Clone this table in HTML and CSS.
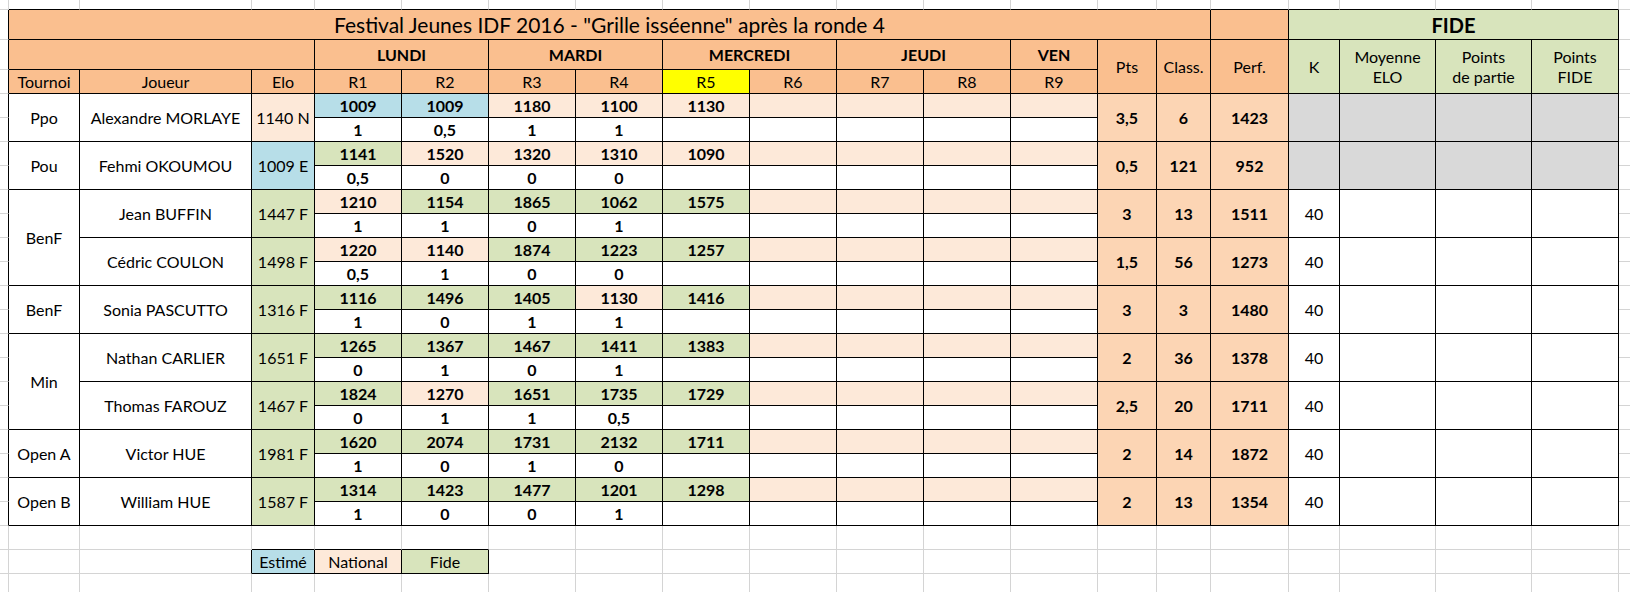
FILE: index.html
```html
<!DOCTYPE html>
<html lang="fr">
<head>
<meta charset="utf-8">
<title>Grille isséenne</title>
<link rel="stylesheet" href="styles.css">
</head>
<body>
<table class="sheet">
<colgroup>
<col class="w-a"><col class="w-tour"><col class="w-joueur"><col class="w-elo">
<col class="w-r"><col class="w-r"><col class="w-r"><col class="w-r"><col class="w-r"><col class="w-r"><col class="w-r"><col class="w-r"><col class="w-r">
<col class="w-pts"><col class="w-class"><col class="w-perf"><col class="w-k"><col class="w-moy"><col class="w-pp"><col class="w-pf"><col class="w-z">
</colgroup>
<tbody>
<tr class="r-top">
<td class="g"></td><td class="t"></td><td class="t"></td><td class="t"></td>
<td class="t"></td><td class="t"></td><td class="t"></td><td class="t"></td><td class="t"></td><td class="t"></td><td class="t"></td><td class="t"></td><td class="t"></td>
<td class="t"></td><td class="t"></td><td class="t"></td><td class="t"></td><td class="t"></td><td class="t"></td><td class="t"></td><td class="g"></td>
</tr>
<tr class="r-head">
<td class="a"></td>
<td class="o title" colspan="14">Festival Jeunes IDF 2016 - &quot;Grille isséenne&quot; après la ronde 4</td>
<td class="o"></td>
<td class="f fide" colspan="4">FIDE</td>
<td class="g"></td>
</tr>
<tr class="r-head">
<td class="a"></td>
<td class="o" colspan="3"></td>
<td class="o b" colspan="2">LUNDI</td>
<td class="o b" colspan="2">MARDI</td>
<td class="o b" colspan="2">MERCREDI</td>
<td class="o b" colspan="2">JEUDI</td>
<td class="o b">VEN</td>
<td class="o" rowspan="2">Pts</td>
<td class="o" rowspan="2">Class.</td>
<td class="o" rowspan="2">Perf.</td>
<td class="f" rowspan="2">K</td>
<td class="f two" rowspan="2">Moyenne<br>ELO</td>
<td class="f two" rowspan="2">Points<br>de partie</td>
<td class="f two" rowspan="2">Points<br>FIDE</td>
<td class="g"></td>
</tr>
<tr class="r-sub">
<td class="a"></td>
<td class="o">Tournoi</td><td class="o">Joueur</td><td class="o">Elo</td>
<td class="o">R1</td><td class="o">R2</td><td class="o">R3</td><td class="o">R4</td><td class="y">R5</td><td class="o">R6</td><td class="o">R7</td><td class="o">R8</td><td class="o">R9</td>
<td class="g"></td>
</tr>

<!-- Alexandre MORLAYE -->
<tr class="r-sub">
<td class="a"></td>
<td rowspan="2">Ppo</td><td rowspan="2">Alexandre MORLAYE</td><td class="n" rowspan="2">1140 N</td>
<td class="e b">1009</td><td class="e b">1009</td><td class="n b">1180</td><td class="n b">1100</td><td class="n b">1130</td><td class="n"></td><td class="n"></td><td class="n"></td><td class="n"></td>
<td class="p b" rowspan="2">3,5</td><td class="p b" rowspan="2">6</td><td class="p b" rowspan="2">1423</td>
<td class="s" rowspan="2"></td><td class="s" rowspan="2"></td><td class="s" rowspan="2"></td><td class="s" rowspan="2"></td>
<td class="g"></td>
</tr>
<tr class="r-sub">
<td class="a"></td>
<td class="b">1</td><td class="b">0,5</td><td class="b">1</td><td class="b">1</td><td></td><td></td><td></td><td></td><td></td>
<td class="g"></td>
</tr>

<!-- Fehmi OKOUMOU -->
<tr class="r-sub">
<td class="a"></td>
<td rowspan="2">Pou</td><td rowspan="2">Fehmi OKOUMOU</td><td class="e" rowspan="2">1009 E</td>
<td class="f b">1141</td><td class="n b">1520</td><td class="n b">1320</td><td class="n b">1310</td><td class="n b">1090</td><td class="n"></td><td class="n"></td><td class="n"></td><td class="n"></td>
<td class="p b" rowspan="2">0,5</td><td class="p b" rowspan="2">121</td><td class="p b" rowspan="2">952</td>
<td class="s" rowspan="2"></td><td class="s" rowspan="2"></td><td class="s" rowspan="2"></td><td class="s" rowspan="2"></td>
<td class="g"></td>
</tr>
<tr class="r-sub">
<td class="a"></td>
<td class="b">0,5</td><td class="b">0</td><td class="b">0</td><td class="b">0</td><td></td><td></td><td></td><td></td><td></td>
<td class="g"></td>
</tr>

<!-- Jean BUFFIN -->
<tr class="r-sub">
<td class="a"></td>
<td rowspan="4">BenF</td><td rowspan="2">Jean BUFFIN</td><td class="f" rowspan="2">1447 F</td>
<td class="n b">1210</td><td class="f b">1154</td><td class="f b">1865</td><td class="f b">1062</td><td class="f b">1575</td><td class="n"></td><td class="n"></td><td class="n"></td><td class="n"></td>
<td class="p b" rowspan="2">3</td><td class="p b" rowspan="2">13</td><td class="p b" rowspan="2">1511</td>
<td rowspan="2">40</td><td rowspan="2"></td><td rowspan="2"></td><td rowspan="2"></td>
<td class="g"></td>
</tr>
<tr class="r-sub">
<td class="a"></td>
<td class="b">1</td><td class="b">1</td><td class="b">0</td><td class="b">1</td><td></td><td></td><td></td><td></td><td></td>
<td class="g"></td>
</tr>

<!-- Cédric COULON -->
<tr class="r-sub">
<td class="a"></td>
<td rowspan="2">Cédric COULON</td><td class="f" rowspan="2">1498 F</td>
<td class="n b">1220</td><td class="n b">1140</td><td class="f b">1874</td><td class="f b">1223</td><td class="f b">1257</td><td class="n"></td><td class="n"></td><td class="n"></td><td class="n"></td>
<td class="p b" rowspan="2">1,5</td><td class="p b" rowspan="2">56</td><td class="p b" rowspan="2">1273</td>
<td rowspan="2">40</td><td rowspan="2"></td><td rowspan="2"></td><td rowspan="2"></td>
<td class="g"></td>
</tr>
<tr class="r-sub">
<td class="a"></td>
<td class="b">0,5</td><td class="b">1</td><td class="b">0</td><td class="b">0</td><td></td><td></td><td></td><td></td><td></td>
<td class="g"></td>
</tr>

<!-- Sonia PASCUTTO -->
<tr class="r-sub">
<td class="a"></td>
<td rowspan="2">BenF</td><td rowspan="2">Sonia PASCUTTO</td><td class="f" rowspan="2">1316 F</td>
<td class="f b">1116</td><td class="f b">1496</td><td class="f b">1405</td><td class="n b">1130</td><td class="f b">1416</td><td class="n"></td><td class="n"></td><td class="n"></td><td class="n"></td>
<td class="p b" rowspan="2">3</td><td class="p b" rowspan="2">3</td><td class="p b" rowspan="2">1480</td>
<td rowspan="2">40</td><td rowspan="2"></td><td rowspan="2"></td><td rowspan="2"></td>
<td class="g"></td>
</tr>
<tr class="r-sub">
<td class="a"></td>
<td class="b">1</td><td class="b">0</td><td class="b">1</td><td class="b">1</td><td></td><td></td><td></td><td></td><td></td>
<td class="g"></td>
</tr>

<!-- Nathan CARLIER -->
<tr class="r-sub">
<td class="a"></td>
<td rowspan="4">Min</td><td rowspan="2">Nathan CARLIER</td><td class="f" rowspan="2">1651 F</td>
<td class="f b">1265</td><td class="f b">1367</td><td class="f b">1467</td><td class="f b">1411</td><td class="f b">1383</td><td class="n"></td><td class="n"></td><td class="n"></td><td class="n"></td>
<td class="p b" rowspan="2">2</td><td class="p b" rowspan="2">36</td><td class="p b" rowspan="2">1378</td>
<td rowspan="2">40</td><td rowspan="2"></td><td rowspan="2"></td><td rowspan="2"></td>
<td class="g"></td>
</tr>
<tr class="r-sub">
<td class="a"></td>
<td class="b">0</td><td class="b">1</td><td class="b">0</td><td class="b">1</td><td></td><td></td><td></td><td></td><td></td>
<td class="g"></td>
</tr>

<!-- Thomas FAROUZ -->
<tr class="r-sub">
<td class="a"></td>
<td rowspan="2">Thomas FAROUZ</td><td class="f" rowspan="2">1467 F</td>
<td class="f b">1824</td><td class="n b">1270</td><td class="f b">1651</td><td class="f b">1735</td><td class="f b">1729</td><td class="n"></td><td class="n"></td><td class="n"></td><td class="n"></td>
<td class="p b" rowspan="2">2,5</td><td class="p b" rowspan="2">20</td><td class="p b" rowspan="2">1711</td>
<td rowspan="2">40</td><td rowspan="2"></td><td rowspan="2"></td><td rowspan="2"></td>
<td class="g"></td>
</tr>
<tr class="r-sub">
<td class="a"></td>
<td class="b">0</td><td class="b">1</td><td class="b">1</td><td class="b">0,5</td><td></td><td></td><td></td><td></td><td></td>
<td class="g"></td>
</tr>

<!-- Victor HUE -->
<tr class="r-sub">
<td class="a"></td>
<td rowspan="2">Open A</td><td rowspan="2">Victor HUE</td><td class="f" rowspan="2">1981 F</td>
<td class="f b">1620</td><td class="f b">2074</td><td class="f b">1731</td><td class="f b">2132</td><td class="f b">1711</td><td class="n"></td><td class="n"></td><td class="n"></td><td class="n"></td>
<td class="p b" rowspan="2">2</td><td class="p b" rowspan="2">14</td><td class="p b" rowspan="2">1872</td>
<td rowspan="2">40</td><td rowspan="2"></td><td rowspan="2"></td><td rowspan="2"></td>
<td class="g"></td>
</tr>
<tr class="r-sub">
<td class="a"></td>
<td class="b">1</td><td class="b">0</td><td class="b">1</td><td class="b">0</td><td></td><td></td><td></td><td></td><td></td>
<td class="g"></td>
</tr>

<!-- William HUE -->
<tr class="r-sub">
<td class="a"></td>
<td rowspan="2">Open B</td><td rowspan="2">William HUE</td><td class="f" rowspan="2">1587 F</td>
<td class="f b">1314</td><td class="f b">1423</td><td class="f b">1477</td><td class="f b">1201</td><td class="f b">1298</td><td class="n"></td><td class="n"></td><td class="n"></td><td class="n"></td>
<td class="p b" rowspan="2">2</td><td class="p b" rowspan="2">13</td><td class="p b" rowspan="2">1354</td>
<td rowspan="2">40</td><td rowspan="2"></td><td rowspan="2"></td><td rowspan="2"></td>
<td class="g"></td>
</tr>
<tr class="r-sub">
<td class="a"></td>
<td class="b">1</td><td class="b">0</td><td class="b">0</td><td class="b">1</td><td></td><td></td><td></td><td></td><td></td>
<td class="g"></td>
</tr>

<!-- empty row -->
<tr class="r-sub">
<td class="g"></td><td class="g"></td><td class="g"></td>
<td class="t"></td><td class="t"></td><td class="t"></td>
<td class="g"></td><td class="g"></td><td class="g"></td><td class="g"></td><td class="g"></td><td class="g"></td><td class="g"></td>
<td class="g"></td><td class="g"></td><td class="g"></td><td class="g"></td><td class="g"></td><td class="g"></td><td class="g"></td><td class="g"></td>
</tr>

<!-- legend -->
<tr class="r-sub">
<td class="g"></td><td class="g"></td><td class="a"></td>
<td class="e">Estimé</td><td class="n">National</td><td class="f">Fide</td>
<td class="g"></td><td class="g"></td><td class="g"></td><td class="g"></td><td class="g"></td><td class="g"></td><td class="g"></td>
<td class="g"></td><td class="g"></td><td class="g"></td><td class="g"></td><td class="g"></td><td class="g"></td><td class="g"></td><td class="g"></td>
</tr>

<tr class="r-sub">
<td class="g"></td><td class="g"></td><td class="g"></td>
<td class="g"></td><td class="g"></td><td class="g"></td>
<td class="g"></td><td class="g"></td><td class="g"></td><td class="g"></td><td class="g"></td><td class="g"></td><td class="g"></td>
<td class="g"></td><td class="g"></td><td class="g"></td><td class="g"></td><td class="g"></td><td class="g"></td><td class="g"></td><td class="g"></td>
</tr>
</tbody>
</table>
</body>
</html>
```

FILE: styles.css
```css
* {
  box-sizing: border-box;
}

html,
body {
  margin: 0;
  padding: 0;
  background: #ffffff;
}

body {
  width: 1630px;
  height: 592px;
  overflow: hidden;
}

.sheet {
  border-collapse: separate;
  border-spacing: 0;
  table-layout: fixed;
  width: 1683px;
  font-family: Lato, "Liberation Sans", sans-serif;
  font-size: 16px;
  color: #000000;
}

.w-a { width: 9px; }
.w-tour { width: 71px; }
.w-joueur { width: 172px; }
.w-elo { width: 63px; }
.w-r { width: 87px; }
.w-pts { width: 59px; }
.w-class { width: 54px; }
.w-perf { width: 78px; }
.w-k { width: 51px; }
.w-moy { width: 96px; }
.w-pp { width: 96px; }
.w-pf { width: 87px; }
.w-z { width: 64px; }

.sheet td {
  padding: 0;
  border-right: 1px solid #000000;
  border-bottom: 1px solid #000000;
  text-align: center;
  vertical-align: middle;
  white-space: nowrap;
  overflow: hidden;
  line-height: 20px;
}

.sheet td.g {
  border-right-color: #d4d4d4;
  border-bottom-color: #d4d4d4;
}

.sheet td.a {
  border-bottom-color: #d4d4d4;
}

.sheet td.t {
  border-right-color: #d4d4d4;
}

.r-top { height: 10px; }
.r-head { height: 30px; }
.r-sub { height: 24px; }

.o { background: #fabf8f; }
.p { background: #fcd5b4; }
.n { background: #fde9d9; }
.f { background: #d8e4bc; }
.e { background: #b7dee8; }
.y { background: #ffff00; }
.s { background: #d9d9d9; }

.b { font-weight: 700; }

.title {
  font-size: 21px;
  line-height: 26px;
}

.fide {
  font-size: 20px;
  font-weight: 700;
}

.two {
  line-height: 24px;
}
```
